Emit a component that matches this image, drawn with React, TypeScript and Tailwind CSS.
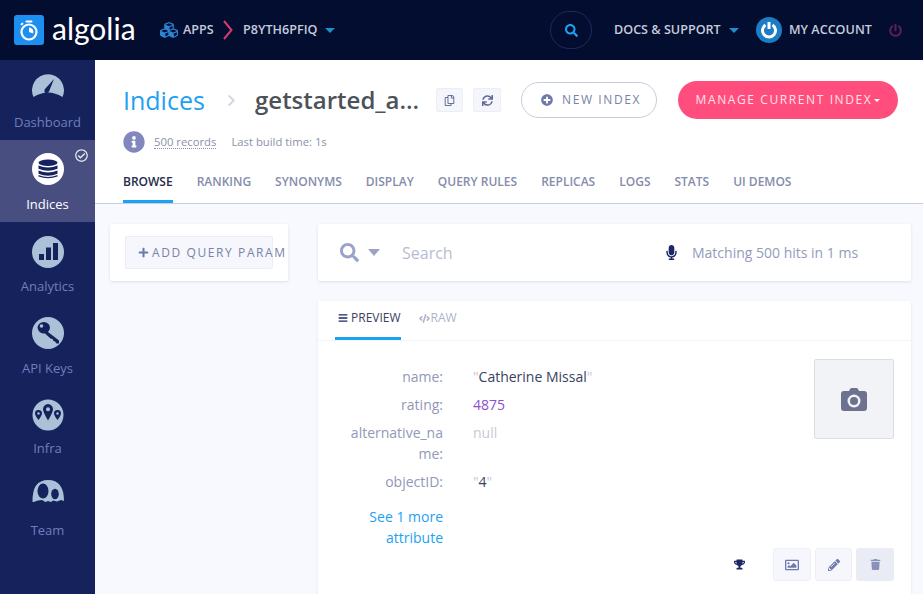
import React from "react";
import { FaPlus, FaSearch, FaMicrophone, FaTrophy, FaRegImage, FaPencilAlt, FaTrash, FaBars, FaCode, FaPlusCircle, FaInfoCircle, FaRegCopy, FaSync, FaRegCheckCircle, FaChevronRight, FaCubes, FaPowerOff } from "react-icons/fa";

const Caret = ({ c = "border-t-[#1f8fc9]" }: { c?: string }) => (
  <span className={`inline-block w-0 h-0 border-x-[5px] border-x-transparent border-t-[5px] ${c}`} />
);

function NavIcon({ name, active }: { name: string; active?: boolean }) {
  const fg = "#16225c";
  const bg = active ? "#ffffff" : "#aac1d8";
  const inner: Record<string, React.ReactNode> = {
    Dashboard: (
      <>
        <path d="M1.5 24 A16 16 0 1 1 30.5 24 Q16 15 1.5 24Z" fill={bg} />
        <path d="M22 6 L17 18.5 Q15 21 13 19.5 Q11.5 18 13 16 Z" fill={fg} />
      </>
    ),
    Indices: (
      <>
        <circle cx="16" cy="16" r="16" fill={bg} />
        <ellipse cx="16" cy="9.8" rx="9.5" ry="3.2" fill={fg} />
        <path d="M6.5 12.5 Q16 16.5 25.5 12.5 V15.8 Q16 19.5 6.5 15.8Z" fill={fg} />
        <path d="M6.5 17.5 Q16 21.5 25.5 17.5 V20.8 Q16 24.5 6.5 20.8Z" fill={fg} />
        <path d="M6.5 22 Q16 26 25.5 22 V23.5 Q16 27 6.5 23.5Z" fill={fg} />
      </>
    ),
    Analytics: (
      <>
        <circle cx="16" cy="16" r="16" fill={bg} />
        <rect x="7" y="18" width="5" height="6" fill={fg} />
        <rect x="14" y="11.5" width="5" height="12.5" fill={fg} />
        <rect x="21" y="7" width="5" height="17" fill={fg} />
      </>
    ),
    "API Keys": (
      <>
        <circle cx="16" cy="16" r="16" fill={bg} />
        <path d="M5.5 10.5 A6.5 6.5 0 0 1 17 7.5 A6.5 6.5 0 0 1 16 15 L27 23.5 L27 26.5 L24.5 26.5 L23 24.5 L21.5 24 L20.5 22 L18.5 21.5 L13 16.5 A6.5 6.5 0 0 1 5.5 10.5Z" fill={fg} />
        <circle cx="9.5" cy="9" r="1.8" fill={bg} />
      </>
    ),
    Infra: (
      <>
        <circle cx="16" cy="16" r="15.5" fill={bg} />
        <path d="M16 5 A5.2 5.2 0 0 1 21 10.5 Q20.5 14 16 21.5 Q11.5 14 11 10.5 A5.2 5.2 0 0 1 16 5Z" fill={fg} />
        <circle cx="16" cy="10.2" r="2" fill={bg} />
        <path d="M6.5 11 A3.4 3.4 0 0 1 10 14.5 Q9.8 16.5 6.5 21 Q3.2 16.5 3 14.5 A3.4 3.4 0 0 1 6.5 11Z" fill={fg} />
        <circle cx="6.5" cy="14.5" r="1.2" fill={bg} />
        <path d="M25.5 11 A3.4 3.4 0 0 1 29 14.5 Q28.8 16.5 25.5 21 Q22.2 16.5 22 14.5 A3.4 3.4 0 0 1 25.5 11Z" fill={fg} />
        <circle cx="25.5" cy="14.5" r="1.2" fill={bg} />
      </>
    ),
    Team: (
      <>
        <path d="M0.5 23 Q0 1 16 1 Q32 1 32 22 L29 21 L25 22.5 L21 21.5 L19 23 L16 22 L13.5 23 L10 21 L6 21.5 L1.5 23 Z" fill={bg} />
        <ellipse cx="11" cy="12" rx="5.5" ry="7.5" fill={fg} />
        <ellipse cx="23" cy="15" rx="3.8" ry="5.2" fill={fg} />
      </>
    ),
  };
  return (
    <svg width="32" height="32" viewBox="0 0 32 32">
      {inner[name]}
    </svg>
  );
}

const NAV: { name: string; h: string; label: string }[] = [
  { name: "Dashboard", h: "h-[80px] pt-[13px]", label: "mt-[8px]" },
  { name: "Indices", h: "h-[82px] pt-[13px]", label: "mt-[10px]" },
  { name: "Analytics", h: "h-[82px] pt-[14px]", label: "mt-[9px]" },
  { name: "API Keys", h: "h-[80px] pt-[13px]", label: "mt-[10px]" },
  { name: "Infra", h: "h-[82px] pt-[15px]", label: "mt-[8px]" },
  { name: "Team", h: "h-[82px] pt-[13px]", label: "mt-[10px]" },
];

const TABS = ["BROWSE", "RANKING", "SYNONYMS", "DISPLAY", "QUERY RULES", "REPLICAS", "LOGS", "STATS", "UI DEMOS"];

function Attr({ k, children, cls }: { k: React.ReactNode; children: React.ReactNode; cls?: string }) {
  return (
    <div className={`flex ${cls ?? ""}`}>
      <div className="w-[94px] text-right text-[#9198b8] break-all">{k}</div>
      <div className="ml-[30px] text-[#3a4160]">{children}</div>
    </div>
  );
}

const Quote = () => <span className="text-[#c5c9d8]">"</span>;

export default function App() {
  return (
    <div className="w-[923px] h-[594px] overflow-hidden flex flex-col bg-[#f7f9fe] font-['Open_Sans',sans-serif] text-[14px]">
      <header className="h-[60px] shrink-0 bg-[#030d30] flex items-center text-[#c6cbdc] text-[12.6px] font-semibold">
        <div className="ml-[14px] w-[30px] h-[30px] rounded-[3px] bg-[#1d8ff0] flex items-center justify-center">
          <svg width="22" height="24" viewBox="0 0 22 24" fill="none">
            <circle cx="11" cy="14" r="7.5" stroke="white" strokeWidth="2.2" />
            <path d="M11 14 V9.5 A4.5 4.5 0 0 1 15.2 15.5Z" fill="white" />
            <rect x="7.5" y="2.5" width="7" height="2" rx="1" fill="white" />
            <rect x="2.5" y="5" width="3" height="2" rx="1" fill="white" transform="rotate(-40 4 6)" />
          </svg>
        </div>
        <span className="ml-[8px] w-[83px] text-white text-[30px] leading-none font-normal font-['Lato',sans-serif] -mt-[5px]">algolia</span>
        <FaCubes className="ml-[25px] text-[#2a86d3] text-[18px]" />
        <span className="ml-[5px] w-[31px]">APPS</span>
        <svg className="ml-[9px]" width="10" height="20" viewBox="0 0 10 20" fill="none"><path d="M1 1 L8.5 10 L1 19" stroke="#d63c6b" strokeWidth="2" /></svg>
        <span className="ml-[10px] w-[76px]">P8YTH6PFIQ</span>
        <span className="ml-[6px] flex"><Caret /></span>
        <div className="ml-[215px] w-[42px] h-[38px] rounded-full border border-[#1e2a5c] flex items-center justify-center">
          <FaSearch className="text-[#1da1f2] text-[13px]" />
        </div>
        <span className="ml-[22px] w-[107px] whitespace-nowrap">DOCS &amp; SUPPORT</span>
        <span className="ml-[8px] flex"><Caret /></span>
        <div className="ml-[17px] w-[26px] h-[26px] rounded-full bg-[#1b7ec4] flex items-center justify-center">
          <svg width="18" height="18" viewBox="0 0 18 18" fill="none"><path d="M5.5 4 A6.5 6.5 0 1 0 12.5 4" stroke="white" strokeWidth="3" /><path d="M9 1 V8" stroke="white" strokeWidth="3" /></svg>
        </div>
        <span className="ml-[7px] w-[83px] whitespace-nowrap">MY ACCOUNT</span>
        <FaPowerOff className="ml-[17px] text-[#5c2050] text-[13px]" />
      </header>
      <div className="flex flex-1 min-h-0">
        <aside className="w-[95px] shrink-0 bg-[#16225c] flex flex-col">
          {NAV.map((n) => {
            const active = n.name === "Indices";
            return (
              <div key={n.name} className={`relative flex flex-col items-center ${n.h} ${active ? "bg-[#484f80]" : ""}`}>
                <NavIcon name={n.name} active={active} />
                <span className={`${n.label} text-[13px] leading-[18px] ${active ? "text-white" : "text-[#6f7fbb]"}`}>{n.name}</span>
                {active && <FaRegCheckCircle className="absolute top-[9px] right-[7px] text-[13px] text-[#e8ebf4]" />}
              </div>
            );
          })}
        </aside>
        <main className="flex-1 min-w-0 flex flex-col">
          <section className="h-[144px] shrink-0 bg-white border-b border-[#c5cce4] pl-[28px] flex flex-col">
            <div className="flex items-center h-[40px] mt-[20px]">
              <span className="w-[81px] text-[25px] leading-none text-[#1da1f2]">Indices</span>
              <FaChevronRight className="ml-[21px] text-[13px] text-[#d3d6e0]" />
              <span className="ml-[17px] w-[164px] text-[24px] leading-none font-semibold text-[#4c5258] whitespace-nowrap">getstarted_a...</span>
              <button className="ml-[17px] w-[27px] h-[24px] rounded-[2px] bg-[#f5f6fb] border border-[#eceef5] flex items-center justify-center"><FaRegCopy className="text-[11px] text-[#6c7299]" /></button>
              <button className="ml-[10px] w-[28px] h-[24px] rounded-[2px] bg-[#f5f6fb] border border-[#eceef5] flex items-center justify-center"><FaSync className="text-[11px] text-[#5f6796]" /></button>
              <button className="ml-[20px] w-[136px] h-[36px] rounded-full border border-[#c9ccdb] bg-white flex items-center justify-center pl-[4px] text-[12px] tracking-[1.6px] text-[#7a81a6]"><FaPlusCircle className="mr-[9px] text-[12px] text-[#6f78ac]" />NEW INDEX</button>
              <button className="ml-[21px] w-[220px] h-[38px] rounded-full bg-[#ff4d7d] flex items-center justify-center text-[12px] font-normal tracking-[1.6px] text-[#ffe3ea] whitespace-nowrap">MANAGE CURRENT INDEX<span className="ml-[2px] inline-block w-0 h-0 border-x-[3px] border-x-transparent border-t-[3px] border-t-white" /></button>
            </div>
            <div className="flex items-center mt-[11px] h-[22px] text-[11.3px]">
              <FaInfoCircle className="text-[22px] text-[#8288be]" />
              <span className="ml-[9px] text-[#8a91ab] border-b border-dotted border-[#8a91ab] leading-[13px]">500 records</span>
              <span className="ml-[15px] text-[#8a91ab]">Last build time: 1s</span>
            </div>
            <nav className="mt-[auto] flex gap-[24px] text-[12px] font-semibold text-[#858cab]">
              {TABS.map((t, i) => (
                <span key={t} className={`pt-[1px] pb-[9px] border-b-[3px] ${i === 0 ? "border-[#1da1f2] text-[#252b4a]" : "border-transparent"}`}>{t}</span>
              ))}
            </nav>
          </section>
          <div className="flex-1 min-h-0 flex items-start pl-[15px] pt-[20px] gap-[30px] overflow-hidden">
            <div className="w-[178px] h-[57px] shrink-0 bg-white rounded-[2px] shadow-[0_1px_3px_rgba(60,70,120,0.14)] px-[15px] pt-[12px]">
              <div className="w-[148px] h-[33px] rounded-[2px] bg-[#f6f7fc] border border-[#eceef5] flex items-center pl-[12px] text-[12px] text-[#7a81a6] tracking-[1.6px] whitespace-nowrap">
                <FaPlus className="shrink-0 text-[11px] text-[#6f78ac] mr-[3px]" />ADD QUERY PARAM
              </div>
            </div>
            <div className="w-[593px] shrink-0 flex flex-col gap-[20px]">
              <div className="h-[57px] bg-white rounded-[2px] shadow-[0_1px_3px_rgba(60,70,120,0.14)] flex items-center pl-[22px]">
                <FaSearch className="text-[19px] text-[#9ba3c9]" />
                <span className="ml-[9px] flex"><span className="inline-block w-0 h-0 border-x-[6.5px] border-x-transparent border-t-[7px] border-t-[#9ba3c9]" /></span>
                <span className="ml-[22px] w-[262px] text-[16px] text-[#b8bcd0]">Search</span>
                <FaMicrophone className="text-[15px] text-[#1b2766]" />
                <span className="ml-[13px] text-[#949bbb]">Matching 500 hits in 1 ms</span>
              </div>
              <div className="h-[340px] bg-white rounded-t-[2px] shadow-[0_1px_3px_rgba(60,70,120,0.1)] relative">
                <div className="flex h-[40px] border-b border-[#f3f4f9] pl-[17px] text-[12px]">
                  <span className="h-[39px] border-b-[3px] border-[#1da1f2] flex items-center gap-[3px] text-[#3a4160] pb-[2px] pl-[3px]"><FaBars className="text-[10px] text-[#1b2766]" />PREVIEW</span>
                  <span className="ml-[18px] flex items-center gap-[1px] text-[#aeb3cc] pb-[5px]"><FaCode className="text-[11px]" />RAW</span>
                </div>
                <div className="flex pt-[25px] leading-[21px]">
                  <div className="flex flex-col pl-[31px]">
                    <Attr k="name:"><Quote />Catherine Missal<Quote /></Attr>
                    <Attr k="rating:" cls="mt-[7px]"><span className="text-[#8a4fd0]">4875</span></Attr>
                    <Attr k="alternative_name:" cls="mt-[7px]"><span className="text-[#c6cad8]">null</span></Attr>
                    <Attr k="objectID:" cls="mt-[7px]"><Quote />4<Quote /></Attr>
                    <div className="w-[94px] text-right text-[#1da1f2] mt-[14px]">See 1 more attribute</div>
                  </div>
                </div>
                <div className="absolute top-[58px] right-[17px] w-[80px] h-[80px] rounded-[2px] bg-[#f2f3f7] border border-[#dcdee5] flex items-center justify-center">
                  <svg width="26" height="23" viewBox="0 0 26 23">
                    <path d="M8 3 L9 1 Q9.5 0 11 0 H15 Q16.5 0 17 1 L18 3 H23 Q26 3 26 6 V20 Q26 23 23 23 H3 Q0 23 0 20 V6 Q0 3 3 3Z" fill="#6d7291" />
                    <circle cx="13" cy="13" r="6.5" fill="#f2f3f7" />
                    <circle cx="13" cy="13" r="4" fill="#6d7291" />
                  </svg>
                </div>
                <div className="absolute top-[247px] right-[17px] flex items-center">
                  <FaTrophy className="text-[11px] text-[#1b2766] mr-[28px]" />
                  <div className="w-[38px] h-[33px] rounded-[3px] bg-[#f6f7fc] border border-[#eff0f7] flex items-center justify-center"><FaRegImage className="text-[14px] text-[#6f78ac]" /></div>
                  <div className="ml-[4px] w-[37px] h-[33px] rounded-[3px] bg-[#f6f7fc] border border-[#eff0f7] flex items-center justify-center"><FaPencilAlt className="text-[12px] text-[#6f78ac]" /></div>
                  <div className="ml-[4px] w-[38px] h-[33px] rounded-[3px] bg-[#eaecf5] flex items-center justify-center"><FaTrash className="text-[11px] text-[#8a92bb]" /></div>
                </div>
              </div>
            </div>
          </div>
        </main>
      </div>
    </div>
  );
}
